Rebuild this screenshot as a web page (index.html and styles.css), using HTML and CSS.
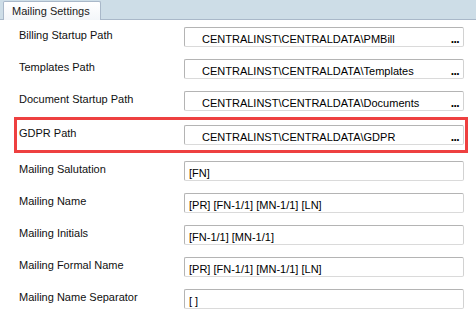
FILE: index.html
```html
<!DOCTYPE html>
<html>
<head>
<meta charset="utf-8">
<link rel="stylesheet" href="styles.css">
</head>
<body>
<div class="tabstrip">
  <div class="tab">Mailing Settings</div>
</div>
<div class="panel">
  <div class="row">
    <div class="label">Billing Startup Path</div>
    <div class="box path"><span class="val">CENTRALINST\CENTRALDATA\PMBill</span><span class="dots">...</span></div>
  </div>
  <div class="row">
    <div class="label">Templates Path</div>
    <div class="box path"><span class="val">CENTRALINST\CENTRALDATA\Templates</span><span class="dots">...</span></div>
  </div>
  <div class="row">
    <div class="label">Document Startup Path</div>
    <div class="box path"><span class="val">CENTRALINST\CENTRALDATA\Documents</span><span class="dots">...</span></div>
  </div>
  <div class="highlight">
    <div class="row">
      <div class="label">GDPR Path</div>
      <div class="box path"><span class="val">CENTRALINST\CENTRALDATA\GDPR</span><span class="dots">...</span></div>
    </div>
  </div>
  <div class="row">
    <div class="label">Mailing Salutation</div>
    <div class="box"><span class="val">[FN]</span></div>
  </div>
  <div class="row">
    <div class="label">Mailing Name</div>
    <div class="box"><span class="val">[PR] [FN-1/1] [MN-1/1] [LN]</span></div>
  </div>
  <div class="row">
    <div class="label">Mailing Initials</div>
    <div class="box"><span class="val">[FN-1/1] [MN-1/1]</span></div>
  </div>
  <div class="row">
    <div class="label">Mailing Formal Name</div>
    <div class="box"><span class="val">[PR] [FN-1/1] [MN-1/1] [LN]</span></div>
  </div>
  <div class="row">
    <div class="label">Mailing Name Separator</div>
    <div class="box"><span class="val">[ ]</span></div>
  </div>
</div>
</body>
</html>
```
FILE: styles.css
```css
html, body {
  margin: 0;
  padding: 0;
  background: #ffffff;
  font-family: "Liberation Sans", Arial, sans-serif;
  font-size: 11px;
  color: #000000;
}

.tabstrip {
  height: 19px;
  background: #cddde7;
  border-bottom: 1px solid #a9b8c9;
  display: flex;
  align-items: flex-end;
  padding-left: 3px;
}

.tab {
  height: 19px;
  box-sizing: border-box;
  width: 98px;
  margin-bottom: -1px;
  background: linear-gradient(#ffffff, #f3f6f9);
  border: 1px solid #a9b8c9;
  border-bottom: none;
  border-radius: 2px 2px 0 0;
  padding-left: 8px;
  line-height: 18px;
  color: #1a1a1a;
}

.panel {
  padding: 7px 0 0 19px;
}

.row {
  display: flex;
  height: 20px;
  margin-bottom: 12px;
}

.label {
  width: 165px;
  line-height: 13px;
  padding-top: 2px;
  color: #101010;
}

.box {
  width: 280px;
  height: 20px;
  box-sizing: border-box;
  border: 1px solid #b4b4b4;
  border-bottom-color: #dadada;
  border-right-color: #d2d2d2;
  border-radius: 2px;
  display: flex;
  align-items: flex-start;
  padding: 5px 0 0 4px;
  line-height: 13px;
  position: relative;
}

.box.path {
  padding-left: 17px;
}

.dots {
  position: absolute;
  right: 4px;
  top: 5px;
  font-weight: bold;
  font-size: 12px;
  line-height: 12px;
  letter-spacing: -0.6px;
}

.highlight {
  margin: -6px 0 8px -5px;
  width: 454px;
  box-sizing: border-box;
  border: 3px solid #ee4040;
  padding: 5px 0 5px 2px;
}

.highlight .row {
  margin-bottom: 0;
}
```
